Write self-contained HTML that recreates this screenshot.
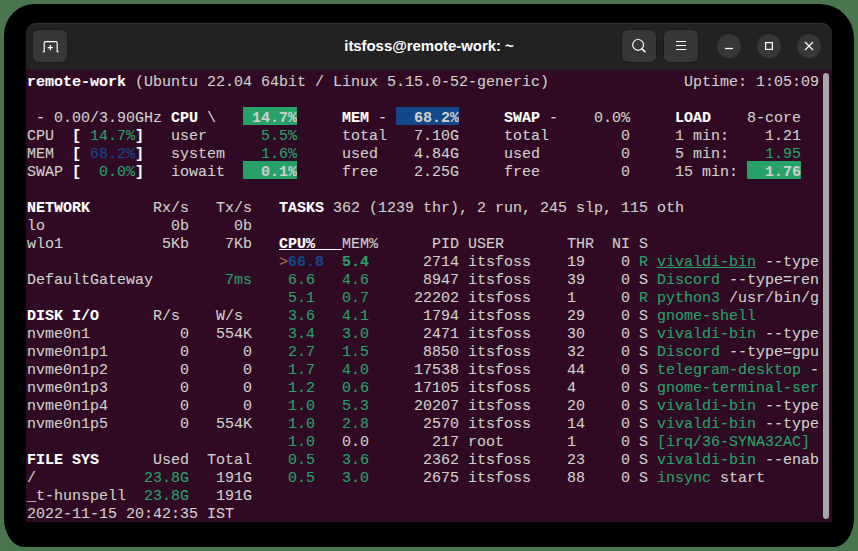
<!DOCTYPE html>
<html><head><meta charset="utf-8"><style>
html,body{margin:0;padding:0;}
body{width:858px;height:551px;overflow:hidden;background:#4a764d;position:relative;}
#shadow{position:absolute;left:4px;top:4px;width:850px;height:543px;background:#000;border-radius:31px 34px 20px 20px / 31px 34px 29px 29px;}
#win{position:absolute;left:26px;top:23px;width:806px;height:499px;background:#300a24;border-radius:11px 11px 0 0;}
#hdr{position:absolute;left:26px;top:23px;width:806px;height:47px;background:#222222;border-radius:11px 11px 0 0;box-shadow:inset 0 1px #303030;}

#hdark{position:absolute;left:26px;top:69px;width:806px;height:1px;background:#1c1c1c;}
.btn{position:absolute;top:29px;width:35px;height:34px;box-sizing:border-box;background:#373737;border:1px solid #1b1b1b;border-radius:7px;}
.cb{position:absolute;top:34px;width:24px;height:24px;background:#373737;border-radius:50%;}
#title{position:absolute;left:26px;width:806px;top:37px;text-align:center;font:bold 15px "Liberation Sans",sans-serif;letter-spacing:-0.07px;color:#ffffff;}
#term s{position:absolute;text-decoration:none;font-style:normal;white-space:pre;font-family:"Liberation Mono",monospace;font-size:15px;letter-spacing:-0.0015px;line-height:18px;color:#d0cfcc;-webkit-text-stroke:0.1px currentColor;}
#term s.b{font-weight:bold;color:#ffffff;}
#term s.g{color:#26a269;}
#term s.gb{color:#26a269;font-weight:bold;}
#term s.bl{color:#12488b;}
#term s.blb{color:#12488b;font-weight:bold;}
#term s.y{color:#a2734c;}
#term i{position:absolute;display:block;}
#term i.bx{height:18px;overflow:hidden;}
#term s.nb{font-weight:bold;}
#term i.boxg{background:#26a269;}
#term i.boxb{background:#12488b;}
#term i.ul{height:1px;background:#ffffff;}
#term i.ul.gu{background:#26a269;}
#sb{position:absolute;left:823px;top:73px;width:6px;height:446px;background:#a8a8a8;border-radius:3px;}
</style></head><body>
<div id="shadow"></div>
<div id="win"></div>
<div id="hdr"></div>
<div id="hdark"></div>
<div class="btn" style="left:32px;width:36px"></div>
<div class="btn" style="left:621px;width:36px"></div>
<div class="btn" style="left:663px;width:36px"></div>
<div class="cb" style="left:717px"></div>
<div class="cb" style="left:757px"></div>
<div class="cb" style="left:797px"></div>
<div id="title">itsfoss@remote-work: ~</div>
<svg width="858" height="551" style="position:absolute;left:0;top:0" fill="none" stroke="#ffffff" stroke-width="1.15">
 <path d="M42.7 51.6H44.2V43Q44.2 41.6 45.6 41.6H55.8Q57.2 41.6 57.2 43V51.6H58.7"/>
 <path d="M50.3 45V50.2M47.7 47.6H52.9" stroke-width="1.3"/>
 <circle cx="638.1" cy="44.9" r="5.4" stroke-width="1.15"/>
 <path d="M641.9 48.7L645.3 52.1" stroke-width="1.5"/>
 <path d="M676 41.5H686M676 45.5H686M676 49.5H686" stroke-width="1.2"/>
 <path d="M725 48.5H733" stroke-width="1.3"/>
 <rect x="765.6" y="42.6" width="6.8" height="6.8" stroke-width="1.2"/>
 <path d="M805 42L813 50M813 42L805 50" stroke-width="1.15"/>
</svg>
<div id="term">
<s class="b" style="left:27px;top:74.0px">remote-work</s>
<s class="n" style="left:135px;top:74.0px">(Ubuntu 22.04 64bit / Linux 5.15.0-52-generic)</s>
<s class="n" style="left:684px;top:74.0px">Uptime: 1:05:09</s>
<s class="n" style="left:36px;top:110.0px">- 0.00/3.90GHz</s>
<s class="b" style="left:171px;top:110.0px">CPU</s>
<s class="n" style="left:207px;top:110.0px">\</s>
<i class="bx boxg" style="left:243px;top:107px;width:54px"><s class="nb" style="left:9px;top:3.0px">14.7%</s></i>
<s class="b" style="left:342px;top:110.0px">MEM</s>
<s class="n" style="left:378px;top:110.0px">-</s>
<i class="bx boxb" style="left:396px;top:107px;width:63px"><s class="nb" style="left:18px;top:3.0px">68.2%</s></i>
<s class="b" style="left:504px;top:110.0px">SWAP</s>
<s class="n" style="left:549px;top:110.0px">-</s>
<s class="n" style="left:594px;top:110.0px">0.0%</s>
<s class="b" style="left:675px;top:110.0px">LOAD</s>
<s class="n" style="left:747px;top:110.0px">8-core</s>
<s class="n" style="left:27px;top:128.0px">CPU</s>
<s class="b" style="left:72px;top:128.0px">[</s>
<s class="g" style="left:90px;top:128.0px">14.7%</s>
<s class="b" style="left:135px;top:128.0px">]</s>
<s class="n" style="left:171px;top:128.0px">user</s>
<s class="g" style="left:261px;top:128.0px">5.5%</s>
<s class="n" style="left:342px;top:128.0px">total</s>
<s class="n" style="left:414px;top:128.0px">7.10G</s>
<s class="n" style="left:504px;top:128.0px">total</s>
<s class="n" style="left:621px;top:128.0px">0</s>
<s class="n" style="left:675px;top:128.0px">1 min:</s>
<s class="n" style="left:765px;top:128.0px">1.21</s>
<s class="n" style="left:27px;top:146.0px">MEM</s>
<s class="b" style="left:72px;top:146.0px">[</s>
<s class="bl" style="left:90px;top:146.0px">68.2%</s>
<s class="b" style="left:135px;top:146.0px">]</s>
<s class="n" style="left:171px;top:146.0px">system</s>
<s class="g" style="left:261px;top:146.0px">1.6%</s>
<s class="n" style="left:342px;top:146.0px">used</s>
<s class="n" style="left:414px;top:146.0px">4.84G</s>
<s class="n" style="left:504px;top:146.0px">used</s>
<s class="n" style="left:621px;top:146.0px">0</s>
<s class="n" style="left:675px;top:146.0px">5 min:</s>
<s class="g" style="left:765px;top:146.0px">1.95</s>
<s class="n" style="left:27px;top:164.0px">SWAP</s>
<s class="b" style="left:72px;top:164.0px">[</s>
<s class="g" style="left:99px;top:164.0px">0.0%</s>
<s class="b" style="left:135px;top:164.0px">]</s>
<s class="n" style="left:171px;top:164.0px">iowait</s>
<i class="bx boxg" style="left:243px;top:161px;width:54px"><s class="nb" style="left:18px;top:3.0px">0.1%</s></i>
<s class="n" style="left:342px;top:164.0px">free</s>
<s class="n" style="left:414px;top:164.0px">2.25G</s>
<s class="n" style="left:504px;top:164.0px">free</s>
<s class="n" style="left:621px;top:164.0px">0</s>
<s class="n" style="left:675px;top:164.0px">15 min:</s>
<i class="bx boxg" style="left:747px;top:161px;width:54px"><s class="nb" style="left:18px;top:3.0px">1.76</s></i>
<s class="b" style="left:27px;top:200.0px">NETWORK</s>
<s class="n" style="left:153px;top:200.0px">Rx/s</s>
<s class="n" style="left:216px;top:200.0px">Tx/s</s>
<s class="b" style="left:279px;top:200.0px">TASKS</s>
<s class="n" style="left:333px;top:200.0px">362 (1239 thr), 2 run, 245 slp, 115 oth</s>
<s class="n" style="left:27px;top:218.0px">lo</s>
<s class="n" style="left:171px;top:218.0px">0b</s>
<s class="n" style="left:234px;top:218.0px">0b</s>
<s class="n" style="left:27px;top:236.0px">wlo1</s>
<s class="n" style="left:162px;top:236.0px">5Kb</s>
<s class="n" style="left:225px;top:236.0px">7Kb</s>
<i class="ul bu" style="left:279px;top:249px;width:63px"></i>
<s class="b" style="left:279px;top:236.0px">CPU%</s>
<s class="n" style="left:342px;top:236.0px">MEM%</s>
<s class="n" style="left:432px;top:236.0px">PID</s>
<s class="n" style="left:468px;top:236.0px">USER</s>
<s class="n" style="left:567px;top:236.0px">THR</s>
<s class="n" style="left:612px;top:236.0px">NI</s>
<s class="n" style="left:639px;top:236.0px">S</s>
<s class="y" style="left:279px;top:254.0px">&gt;</s>
<s class="blb" style="left:288px;top:254.0px">66.8</s>
<s class="gb" style="left:342px;top:254.0px">5.4</s>
<s class="n" style="left:423px;top:254.0px">2714</s>
<s class="n" style="left:468px;top:254.0px">itsfoss</s>
<s class="n" style="left:567px;top:254.0px">19</s>
<s class="n" style="left:621px;top:254.0px">0</s>
<s class="g" style="left:639px;top:254.0px">R</s>
<i class="ul gu" style="left:657px;top:267px;width:99px"></i>
<s class="g" style="left:657px;top:254.0px">vivaldi-bin</s>
<s class="n" style="left:765px;top:254.0px">--type</s>
<s class="n" style="left:27px;top:272.0px">DefaultGateway</s>
<s class="g" style="left:225px;top:272.0px">7ms</s>
<s class="g" style="left:288px;top:272.0px">6.6</s>
<s class="g" style="left:342px;top:272.0px">4.6</s>
<s class="n" style="left:423px;top:272.0px">8947</s>
<s class="n" style="left:468px;top:272.0px">itsfoss</s>
<s class="n" style="left:567px;top:272.0px">39</s>
<s class="n" style="left:621px;top:272.0px">0</s>
<s class="n" style="left:639px;top:272.0px">S</s>
<s class="g" style="left:657px;top:272.0px">Discord</s>
<s class="n" style="left:729px;top:272.0px">--type=ren</s>
<s class="g" style="left:288px;top:290.0px">5.1</s>
<s class="g" style="left:342px;top:290.0px">0.7</s>
<s class="n" style="left:414px;top:290.0px">22202</s>
<s class="n" style="left:468px;top:290.0px">itsfoss</s>
<s class="n" style="left:567px;top:290.0px">1</s>
<s class="n" style="left:621px;top:290.0px">0</s>
<s class="g" style="left:639px;top:290.0px">R</s>
<s class="g" style="left:657px;top:290.0px">python3</s>
<s class="n" style="left:729px;top:290.0px">/usr/bin/g</s>
<s class="b" style="left:27px;top:308.0px">DISK I/O</s>
<s class="n" style="left:153px;top:308.0px">R/s</s>
<s class="n" style="left:216px;top:308.0px">W/s</s>
<s class="g" style="left:288px;top:308.0px">3.6</s>
<s class="g" style="left:342px;top:308.0px">4.1</s>
<s class="n" style="left:423px;top:308.0px">1794</s>
<s class="n" style="left:468px;top:308.0px">itsfoss</s>
<s class="n" style="left:567px;top:308.0px">29</s>
<s class="n" style="left:621px;top:308.0px">0</s>
<s class="n" style="left:639px;top:308.0px">S</s>
<s class="g" style="left:657px;top:308.0px">gnome-shell</s>
<s class="n" style="left:27px;top:326.0px">nvme0n1</s>
<s class="n" style="left:180px;top:326.0px">0</s>
<s class="n" style="left:216px;top:326.0px">554K</s>
<s class="g" style="left:288px;top:326.0px">3.4</s>
<s class="g" style="left:342px;top:326.0px">3.0</s>
<s class="n" style="left:423px;top:326.0px">2471</s>
<s class="n" style="left:468px;top:326.0px">itsfoss</s>
<s class="n" style="left:567px;top:326.0px">30</s>
<s class="n" style="left:621px;top:326.0px">0</s>
<s class="n" style="left:639px;top:326.0px">S</s>
<s class="g" style="left:657px;top:326.0px">vivaldi-bin</s>
<s class="n" style="left:765px;top:326.0px">--type</s>
<s class="n" style="left:27px;top:344.0px">nvme0n1p1</s>
<s class="n" style="left:180px;top:344.0px">0</s>
<s class="n" style="left:243px;top:344.0px">0</s>
<s class="g" style="left:288px;top:344.0px">2.7</s>
<s class="g" style="left:342px;top:344.0px">1.5</s>
<s class="n" style="left:423px;top:344.0px">8850</s>
<s class="n" style="left:468px;top:344.0px">itsfoss</s>
<s class="n" style="left:567px;top:344.0px">32</s>
<s class="n" style="left:621px;top:344.0px">0</s>
<s class="n" style="left:639px;top:344.0px">S</s>
<s class="g" style="left:657px;top:344.0px">Discord</s>
<s class="n" style="left:729px;top:344.0px">--type=gpu</s>
<s class="n" style="left:27px;top:362.0px">nvme0n1p2</s>
<s class="n" style="left:180px;top:362.0px">0</s>
<s class="n" style="left:243px;top:362.0px">0</s>
<s class="g" style="left:288px;top:362.0px">1.7</s>
<s class="g" style="left:342px;top:362.0px">4.0</s>
<s class="n" style="left:414px;top:362.0px">17538</s>
<s class="n" style="left:468px;top:362.0px">itsfoss</s>
<s class="n" style="left:567px;top:362.0px">44</s>
<s class="n" style="left:621px;top:362.0px">0</s>
<s class="n" style="left:639px;top:362.0px">S</s>
<s class="g" style="left:657px;top:362.0px">telegram-desktop</s>
<s class="n" style="left:810px;top:362.0px">-</s>
<s class="n" style="left:27px;top:380.0px">nvme0n1p3</s>
<s class="n" style="left:180px;top:380.0px">0</s>
<s class="n" style="left:243px;top:380.0px">0</s>
<s class="g" style="left:288px;top:380.0px">1.2</s>
<s class="g" style="left:342px;top:380.0px">0.6</s>
<s class="n" style="left:414px;top:380.0px">17105</s>
<s class="n" style="left:468px;top:380.0px">itsfoss</s>
<s class="n" style="left:567px;top:380.0px">4</s>
<s class="n" style="left:621px;top:380.0px">0</s>
<s class="n" style="left:639px;top:380.0px">S</s>
<s class="g" style="left:657px;top:380.0px">gnome-terminal-ser</s>
<s class="n" style="left:27px;top:398.0px">nvme0n1p4</s>
<s class="n" style="left:180px;top:398.0px">0</s>
<s class="n" style="left:243px;top:398.0px">0</s>
<s class="g" style="left:288px;top:398.0px">1.0</s>
<s class="g" style="left:342px;top:398.0px">5.3</s>
<s class="n" style="left:414px;top:398.0px">20207</s>
<s class="n" style="left:468px;top:398.0px">itsfoss</s>
<s class="n" style="left:567px;top:398.0px">20</s>
<s class="n" style="left:621px;top:398.0px">0</s>
<s class="n" style="left:639px;top:398.0px">S</s>
<s class="g" style="left:657px;top:398.0px">vivaldi-bin</s>
<s class="n" style="left:765px;top:398.0px">--type</s>
<s class="n" style="left:27px;top:416.0px">nvme0n1p5</s>
<s class="n" style="left:180px;top:416.0px">0</s>
<s class="n" style="left:216px;top:416.0px">554K</s>
<s class="g" style="left:288px;top:416.0px">1.0</s>
<s class="g" style="left:342px;top:416.0px">2.8</s>
<s class="n" style="left:423px;top:416.0px">2570</s>
<s class="n" style="left:468px;top:416.0px">itsfoss</s>
<s class="n" style="left:567px;top:416.0px">14</s>
<s class="n" style="left:621px;top:416.0px">0</s>
<s class="n" style="left:639px;top:416.0px">S</s>
<s class="g" style="left:657px;top:416.0px">vivaldi-bin</s>
<s class="n" style="left:765px;top:416.0px">--type</s>
<s class="g" style="left:288px;top:434.0px">1.0</s>
<s class="n" style="left:342px;top:434.0px">0.0</s>
<s class="n" style="left:432px;top:434.0px">217</s>
<s class="n" style="left:468px;top:434.0px">root</s>
<s class="n" style="left:567px;top:434.0px">1</s>
<s class="n" style="left:621px;top:434.0px">0</s>
<s class="n" style="left:639px;top:434.0px">S</s>
<s class="g" style="left:657px;top:434.0px">[irq/36-SYNA32AC]</s>
<s class="b" style="left:27px;top:452.0px">FILE SYS</s>
<s class="n" style="left:153px;top:452.0px">Used</s>
<s class="n" style="left:207px;top:452.0px">Total</s>
<s class="g" style="left:288px;top:452.0px">0.5</s>
<s class="g" style="left:342px;top:452.0px">3.6</s>
<s class="n" style="left:423px;top:452.0px">2362</s>
<s class="n" style="left:468px;top:452.0px">itsfoss</s>
<s class="n" style="left:567px;top:452.0px">23</s>
<s class="n" style="left:621px;top:452.0px">0</s>
<s class="n" style="left:639px;top:452.0px">S</s>
<s class="g" style="left:657px;top:452.0px">vivaldi-bin</s>
<s class="n" style="left:765px;top:452.0px">--enab</s>
<s class="n" style="left:27px;top:470.0px">/</s>
<s class="g" style="left:144px;top:470.0px">23.8G</s>
<s class="n" style="left:216px;top:470.0px">191G</s>
<s class="g" style="left:288px;top:470.0px">0.5</s>
<s class="g" style="left:342px;top:470.0px">3.0</s>
<s class="n" style="left:423px;top:470.0px">2675</s>
<s class="n" style="left:468px;top:470.0px">itsfoss</s>
<s class="n" style="left:567px;top:470.0px">88</s>
<s class="n" style="left:621px;top:470.0px">0</s>
<s class="n" style="left:639px;top:470.0px">S</s>
<s class="g" style="left:657px;top:470.0px">insync</s>
<s class="n" style="left:720px;top:470.0px">start</s>
<s class="n" style="left:27px;top:488.0px">_t-hunspell</s>
<s class="g" style="left:144px;top:488.0px">23.8G</s>
<s class="n" style="left:216px;top:488.0px">191G</s>
<s class="n" style="left:27px;top:506.0px">2022-11-15 20:42:35 IST</s>
</div>
<div id="sb"></div>
</body></html>
